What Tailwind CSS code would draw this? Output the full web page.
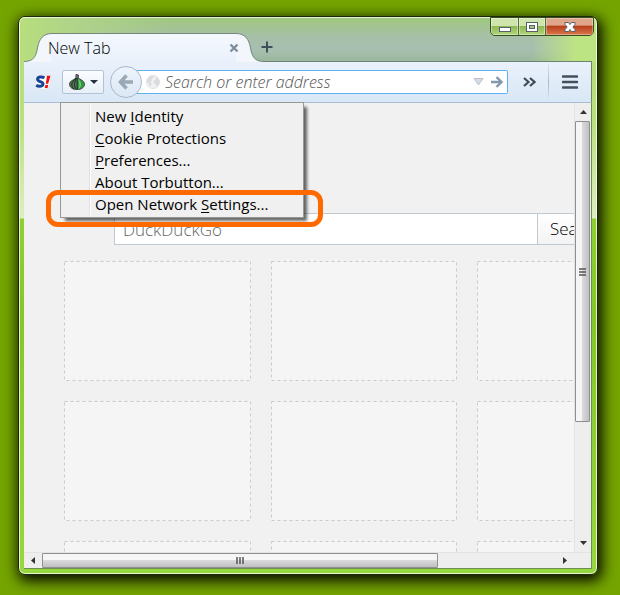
<!DOCTYPE html>
<html lang="en">
<head>
<meta charset="utf-8">
<meta name="viewport" content="width=device-width, initial-scale=1">
<title>New Tab</title>
<script src="https://cdn.jsdelivr.net/npm/@tailwindcss/browser@4"></script>
</head>
<body class="flex h-screen overflow-hidden bg-[#74a400] pt-4 pr-[22px] pb-5 pl-[18px] font-['Open_Sans','Noto_Sans',sans-serif] text-[15px] text-black">
<div class="relative flex min-w-0 flex-1 flex-col rounded-[7px] border border-[#1c2a08] bg-[linear-gradient(#b5dc7e_0px,#b9e07c_100px,#dcefc0_201px,#8fd032_202px,#85c728_300px,#98d73f_100%)] px-[5px] pb-[5px] shadow-[inset_0_0_0_1px_rgba(255,255,255,.75),2px_4px_14px_2px_rgba(0,0,0,.95)]">

  <!-- Title bar -->
  <header class="-mx-1 flex h-[45px] shrink-0 flex-col justify-end rounded-t-[5px] bg-[linear-gradient(90deg,#b7de7d_0px,#b0d488_50px,transparent_150px,transparent_calc(100%_-_65px),#bde483_calc(100%_-_20px)),linear-gradient(#9fc97c_0px,#a6bfa8_20px,#a7bfb0_32px,#9ab79c_100%)] px-1 shadow-[inset_0_1px_0_rgba(255,255,255,.7)]">
    <div class="flex h-[29px] items-stretch">
      <svg class="h-[29px] w-7 shrink-0" viewBox="0 0 28 29"><path d="M0 29V28.500C10 28.500 12 23 13.500 15C15 6 19 .5 28 .5V29Z" fill="#f3f6fb"/><path d="M0 28.500C10 28.500 12 23 13.500 15C15 6 19 .5 28 .5" fill="none" stroke="#75867c"/></svg>
      <div class="-ml-px flex w-[186px] items-center justify-between border-t border-[#75867c] bg-linear-to-b from-[#f4f8fe] to-[#eaf1fb]">
        <span class="-ml-[3px] text-base font-light">New Tab</span>
        <button aria-label="Close tab" class="z-10 -mr-0.5"><svg class="h-[10px] w-[10px]" viewBox="0 0 10 10"><path d="M1.500 1.500l7 7m0-7l-7 7" stroke="#7f8d9b" stroke-width="2.400"/></svg></button>
      </div>
      <svg class="-ml-px h-[29px] w-7 shrink-0" viewBox="0 0 28 29"><path d="M28 29V28.500C18 28.500 16 23 14.500 15C13 6 9 .5 0 .5V29Z" fill="#f3f6fb"/><path d="M28 28.500C18 28.500 16 23 14.500 15C13 6 9 .5 0 .5" fill="none" stroke="#75867c"/></svg>
      <div class="flex flex-1 items-center border-b border-[#6f8274]">
        <button aria-label="Open a new tab" class="-ml-[3px]"><svg class="h-3 w-3" viewBox="0 0 12 12"><path d="M6 .5v11M.5 6h11" stroke="#3f5059" stroke-width="2"/></svg></button>
      </div>
    </div>
  </header>

  <div class="absolute top-0 right-[3px] flex h-[19px] overflow-hidden rounded-b-[5px] border border-[#35501d] bg-linear-to-b from-[#cfe5ae] from-45% via-[#8fb855] via-50% to-[#b2d67c]">
    <button aria-label="Minimize" class="flex w-7 items-center justify-center border-r border-[#4e6d31] shadow-[inset_0_0_0_1px_rgba(255,255,255,.4)]"><svg class="h-[14px] w-4" viewBox="0 0 16 14"><rect x="2.500" y="7.500" width="11" height="4" fill="#fff" stroke="#57616b"/></svg></button>
    <button aria-label="Maximize" class="flex w-[27px] items-center justify-center border-r border-[#4e6d31] shadow-[inset_0_0_0_1px_rgba(255,255,255,.4)]"><svg class="h-[14px] w-4" viewBox="0 0 16 14"><rect x="2.500" y="2.500" width="11" height="9" fill="#fff" stroke="#57616b"/><rect x="5.500" y="5.500" width="5" height="3" fill="#a7c77e" stroke="#57616b"/></svg></button>
    <button aria-label="Close" class="flex w-[47px] items-center justify-center bg-linear-to-b from-[#dfa68c] from-40% via-[#b9401c] via-50% to-[#d9784b] shadow-[inset_0_0_0_1px_rgba(255,255,255,.35)]"><svg class="h-[14px] w-4" viewBox="0 0 16 14"><path d="M3 2.500h3.500l1.500 2 1.500-2H13V4.500L10.800 7L13 9.500V11.500H9.500L8 9.500L6.500 11.500H3V9.500L5.200 7L3 4.500Z" fill="#fff" stroke="#57616b"/></svg></button>
  </div>

  <!-- Navigation toolbar -->
  <nav class="z-10 flex h-[41px] shrink-0 items-center border-r border-b border-r-[#6f8a5c] border-b-[#a6bdd4] bg-linear-to-b from-[#eaf1fb] to-[#d9e7f6]">
    <button aria-label="NoScript" class="ml-[11px] h-4 w-4"><svg viewBox="0 0 16 16" class="h-4 w-4 overflow-visible"><circle cx="8" cy="8" r="7.500" fill="#fff" stroke="#e1e4e8"/><path d="M9.500 3.800C7 2.300 2.500 2.600 2.600 5.400C2.700 8.100 8 7.300 8 10C8 12.700 3.500 12.700 1.200 11.200" fill="none" stroke="#174596" stroke-width="3"/><path d="M12 1.800h3.400l-2.200 8h-2.400ZM10.400 11h2.800l-.7 2.900H9.700Z" fill="#e11"/></svg></button>
    <div class="relative ml-[11px]">
      <button aria-label="Torbutton" class="flex h-6 w-[42px] items-center justify-center gap-[5px] rounded-[2px] border border-[#b3c3d5] bg-linear-to-b from-[#fbfdff] to-[#e7eff8]">
        <svg class="h-4 w-4" viewBox="0 0 16 16"><path d="M7 .4L9.500 1L9.300 3.800C11 5.800 15.500 6.500 15.500 10.300C15.500 13.500 12 15.700 8 15.700S.5 13.500 .5 10.300C.5 6.500 5.500 6 6.800 3.800Z" fill="#59705c" stroke="#26352a" stroke-width=".8"/><path d="M8.200 4C11 6 15 7 15 10.300C15 13 12 15.300 8.200 15.300Z" fill="#2f9a45"/><path d="M7.500 4C2 8 1.500 12 5 15M7.800 4C4.500 9 5 13 7.500 15.500M8.200 4V15.500" fill="none" stroke="#1a3320"/><path d="M9 5C13 8 12.500 13 10 15C10.800 11 10.500 8 9 5Z" fill="#8bd07c"/><path d="M7.200 .8L9.300 1.200L8.900 4H7Z" fill="#735b78"/></svg>
        <svg class="h-1 w-2" viewBox="0 0 8 4"><path d="M0 0h8L4 4Z" fill="#26323d"/></svg>
      </button>
      <div role="menu" class="absolute top-8 -left-0.5 flex w-[244px] flex-col border border-[#979797] bg-[#f0f0f0] py-0.5 text-left shadow-[4px_4px_3px_-1px_rgba(0,0,0,.6)]">
        <div class="ml-[29px] flex flex-col border-l border-white pl-1 shadow-[-1px_0_0_#e0e0e0]">
          <button role="menuitem" class="h-[22px] text-left leading-[22px]">New <u class="underline-offset-2">I</u>dentity</button>
          <button role="menuitem" class="h-[22px] text-left leading-[22px]"><u class="underline-offset-2">C</u>ookie Protections</button>
          <button role="menuitem" class="h-[22px] text-left leading-[22px]"><u class="underline-offset-2">P</u>references...</button>
          <button role="menuitem" class="h-[22px] text-left leading-[22px]"><u class="underline-offset-2">A</u>bout Torbutton...</button>
          <button role="menuitem" class="h-[22px] text-left leading-[22px]">Open Network <u class="underline-offset-2">S</u>ettings...</button>
        </div>
      </div>
      <div class="absolute top-[120px] -left-4 h-[37px] w-[277px] rounded-xl border-[5px] border-[#ff6a00]"></div>
    </div>
    <button aria-label="Back" class="z-10 ml-1.5 flex h-8 w-8 shrink-0 items-center justify-center rounded-full border border-[#a9b9ca] bg-linear-to-b from-[#edf4fc] to-[#dce8f5]"><svg class="h-4 w-4" viewBox="0 0 16 16"><path d="M8.500 1.500L2.500 8L8.500 14.500M3 8H15" fill="none" stroke="#9ba8b5" stroke-width="3.600"/></svg></button>
    <div class="-ml-1.5 flex h-6 min-w-0 flex-1 items-center rounded-r-[2px] border border-l-0 border-[#5eb2ef] bg-white pr-1 pl-2.5">
      <svg class="h-[14px] w-[14px] shrink-0" viewBox="0 0 14 14"><circle cx="7" cy="7" r="6.500" fill="#f0f1f2" stroke="#dfe1e3"/><path d="M2 3C4 1 6 .5 7.500 1L7 3L5.500 4L6 6L4 6.500L5.500 8.500L5 11L3.500 11L2.500 8L.8 6.500C.8 5 1.200 4 2 3ZM9 2.500C11 2 13 4 13.300 6.500L12.500 10L10.500 11.500L9.500 9L7.500 8L8 5.500L10 4.500Z" fill="#d9dbde"/></svg>
      <input aria-label="Address" placeholder="Search or enter address" class="ml-[5px] h-[22px] min-w-0 flex-1 bg-transparent text-base font-light italic outline-none placeholder:text-[#555]">
      <svg class="h-2 w-[11px] shrink-0" viewBox="0 0 11 8"><path d="M1 .5h9L5.500 7Z" fill="#d6dce3" stroke="#b9c2cd"/></svg>
      <button aria-label="Go" class="ml-[7px]"><svg class="h-3 w-[12px]" viewBox="0 0 12 12"><path d="M0 6H10M5.500 1L10.500 6L5.500 11" fill="none" stroke="#8598aa" stroke-width="2.400"/></svg></button>
    </div>
    <button aria-label="More tools" class="ml-[15px]"><svg class="h-[10px] w-[13px]" viewBox="0 0 13 10"><path d="M1 1L5.500 5L1 9M7 1L11.500 5L7 9" fill="none" stroke="#3e4b58" stroke-width="2.200"/></svg></button>
    <div class="ml-3 h-9 w-px bg-linear-to-b from-[#dbe6f1] via-[#a8b7c6] to-[#dbe6f1]"></div>
    <button aria-label="Open menu" class="mr-[13px] ml-[13px]"><svg class="h-[14px] w-4" viewBox="0 0 16 14"><path d="M1 1.500h14M1 7h14M1 12.500h14" stroke="#43515e" stroke-width="2.600" stroke-linecap="round"/></svg></button>
  </nav>

  <!-- Page viewport -->
  <div class="flex min-h-0 flex-1 flex-col border-r border-b border-[#6d8f52] bg-[#f1f1f1]">
    <div class="flex min-h-0 flex-1">
      <main class="min-w-0 flex-1 overflow-hidden pt-[110px]">
        <form class="ml-[90px] flex h-8 w-[506px] border border-[#c2cad1] bg-white">
          <input aria-label="Search" placeholder="DuckDuckGo" class="h-full min-w-0 flex-1 px-2 text-[17px] font-light outline-none placeholder:text-[#666]">
          <button type="button" class="w-[82px] border-l border-[#c2cad1] bg-linear-to-b from-white to-[#f3f3f3] pl-3 text-left text-[17px] font-light">Search</button>
        </form>
        <div class="mt-4 ml-10 grid w-max grid-cols-[187px_186px_187px] gap-x-5 gap-y-5">
          <svg class="h-[120px] w-full"><rect x=".5" y=".5" width="186" height="119" fill="#f5f5f5" stroke="#cbcbcb" stroke-dasharray="3 3"/></svg>
          <svg class="h-[120px] w-full"><rect x=".5" y=".5" width="185" height="119" fill="#f5f5f5" stroke="#cbcbcb" stroke-dasharray="3 3"/></svg>
          <svg class="h-[120px] w-full"><rect x=".5" y=".5" width="186" height="119" fill="#f5f5f5" stroke="#cbcbcb" stroke-dasharray="3 3"/></svg>
          <svg class="h-[120px] w-full"><rect x=".5" y=".5" width="186" height="119" fill="#f5f5f5" stroke="#cbcbcb" stroke-dasharray="3 3"/></svg>
          <svg class="h-[120px] w-full"><rect x=".5" y=".5" width="185" height="119" fill="#f5f5f5" stroke="#cbcbcb" stroke-dasharray="3 3"/></svg>
          <svg class="h-[120px] w-full"><rect x=".5" y=".5" width="186" height="119" fill="#f5f5f5" stroke="#cbcbcb" stroke-dasharray="3 3"/></svg>
          <svg class="h-[120px] w-full"><rect x=".5" y=".5" width="186" height="119" fill="#f5f5f5" stroke="#cbcbcb" stroke-dasharray="3 3"/></svg>
          <svg class="h-[120px] w-full"><rect x=".5" y=".5" width="185" height="119" fill="#f5f5f5" stroke="#cbcbcb" stroke-dasharray="3 3"/></svg>
          <svg class="h-[120px] w-full"><rect x=".5" y=".5" width="186" height="119" fill="#f5f5f5" stroke="#cbcbcb" stroke-dasharray="3 3"/></svg>
        </div>
      </main>
      <div class="flex w-[17px] shrink-0 flex-col border-l border-[#e3e3e3] bg-[#eeeeee]">
        <button aria-label="Scroll up" class="flex h-[18px] items-center justify-center"><svg class="h-1 w-[7px]" viewBox="0 0 7 4"><path d="M0 4h7L3.500 0Z" fill="#333"/></svg></button>
        <div class="min-h-0 flex-1">
          <div class="flex h-[73%] w-[15px] items-center justify-center rounded-[1px] border border-[#8f8f8f] bg-linear-to-r from-[#f6f6f6] from-45% via-[#dadadb] via-50% to-[#bfc0c4]"><svg class="h-2 w-[7px]" viewBox="0 0 7 8"><path d="M0 1h7M0 4h7M0 7h7" stroke="#555" stroke-width="1.500"/></svg></div>
        </div>
        <button aria-label="Scroll down" class="flex h-[18px] items-center justify-center"><svg class="h-1 w-[7px]" viewBox="0 0 7 4"><path d="M0 0h7L3.500 4Z" fill="#333"/></svg></button>
      </div>
    </div>
    <div class="flex h-4 shrink-0 border-t border-[#e3e3e3] bg-[#eeeeee] pr-[17px]">
      <button aria-label="Scroll left" class="flex w-[18px] items-center justify-center"><svg class="h-[7px] w-1" viewBox="0 0 4 7"><path d="M4 0v7L0 3.500Z" fill="#333"/></svg></button>
      <div class="min-w-0 flex-1">
        <div class="flex h-[15px] w-[77%] items-center justify-center rounded-[1px] border border-[#8f8f8f] bg-linear-to-b from-[#f6f6f6] from-45% via-[#dadadb] via-50% to-[#bfc0c4]"><svg class="h-[7px] w-2" viewBox="0 0 8 7"><path d="M1 0v7M4 0v7M7 0v7" stroke="#555" stroke-width="1.500"/></svg></div>
      </div>
      <button aria-label="Scroll right" class="flex w-[18px] items-center justify-center"><svg class="h-[7px] w-1" viewBox="0 0 4 7"><path d="M0 0v7L4 3.500Z" fill="#333"/></svg></button>
    </div>
  </div>
</div>
</body>
</html>
